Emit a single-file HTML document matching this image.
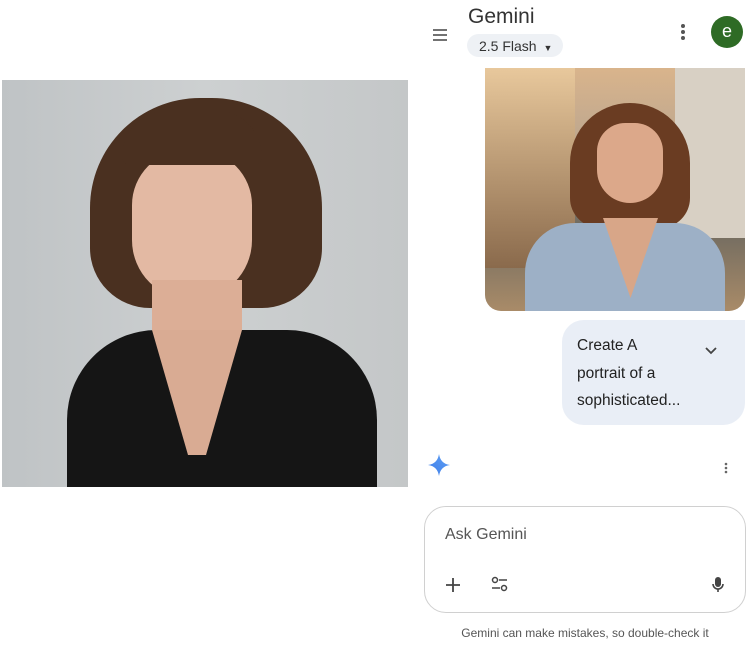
<!DOCTYPE html>
<html><head><style>
*{margin:0;padding:0;box-sizing:border-box}
body{width:748px;height:645px;background:#fff;font-family:"Liberation Sans",sans-serif;position:relative;overflow:hidden;color:#1f1f1f}
.a{position:absolute}
</style></head><body>
<div class="a" style="left:2px;top:80px;width:406px;height:407px;background:linear-gradient(90deg,#bfc3c5,#cdd0d1 50%,#c4c7c8);overflow:hidden">
 <div class="a" style="left:88px;top:18px;width:232px;height:210px;background:#4a3020;border-radius:110px 110px 60px 60px"></div>
 <div class="a" style="left:130px;top:70px;width:120px;height:150px;background:#e3b9a3;border-radius:55px 55px 60px 60px"></div>
 <div class="a" style="left:120px;top:30px;width:140px;height:55px;background:#4a3020;border-radius:60px 60px 10px 10px"></div>
 <div class="a" style="left:150px;top:200px;width:90px;height:80px;background:#dcae96"></div>
 <div class="a" style="left:65px;top:250px;width:310px;height:170px;background:#151515;border-radius:90px 90px 0 0"></div>
 <div class="a" style="left:150px;top:250px;width:90px;height:125px;background:#d9ab93;clip-path:polygon(0 0,100% 0,60% 100%,40% 100%)"></div>
</div>
<svg class="a" style="left:432px;top:28px" width="16" height="14"><path d="M1 2h14M1 7h14M1 12h14" stroke="#444" stroke-width="1.6"/></svg>
<div class="a" style="left:468px;top:5px;font-size:21px;color:#333">Gemini</div>
<div class="a" style="left:467px;top:34px;width:96px;height:23px;background:#eef1f5;border-radius:12px;font-size:14px;color:#333;padding:4px 0 0 12px">2.5 Flash <span style="font-size:9px;margin-left:3px">▼</span></div>
<svg class="a" style="left:680px;top:23px" width="6" height="18"><circle cx="3" cy="3" r="2" fill="#555"/><circle cx="3" cy="9" r="2" fill="#555"/><circle cx="3" cy="15" r="2" fill="#555"/></svg>
<div class="a" style="left:711px;top:16px;width:32px;height:32px;border-radius:50%;background:#2e6b25;color:#fff;font-size:18px;text-align:center;line-height:30px">e</div>
<div class="a" style="left:485px;top:68px;width:260px;height:243px;border-radius:0 0 16px 16px;overflow:hidden;background:linear-gradient(180deg,#d9b48c 0%,#b9a58f 35%,#6f6a60 65%,#a98b68 100%)">
 <div class="a" style="left:0;top:0;width:90px;height:200px;background:linear-gradient(#e8c89c,#8a6a4c)"></div>
 <div class="a" style="left:190px;top:0;width:70px;height:170px;background:#d8d0c4"></div>
 <div class="a" style="left:85px;top:35px;width:120px;height:125px;background:#6a3c22;border-radius:60px 60px 30px 30px"></div>
 <div class="a" style="left:112px;top:55px;width:66px;height:80px;background:#dca88a;border-radius:30px 30px 35px 35px"></div>
 <div class="a" style="left:40px;top:155px;width:200px;height:100px;background:#9db0c6;border-radius:50px 50px 0 0"></div>
 <div class="a" style="left:118px;top:150px;width:55px;height:80px;background:#d8a688;clip-path:polygon(0 0,100% 0,50% 100%)"></div>
</div>
<div class="a" style="left:562px;top:320px;width:183px;height:105px;background:#e9eef6;border-radius:22px 0 22px 22px;padding:12px 0 0 15px;font-size:15.5px;line-height:27.5px;color:#222">Create A<br>portrait of a<br>sophisticated...</div>
<svg class="a" style="left:705px;top:347px" width="12" height="8"><path d="M1 1l5 5 5-5" stroke="#444" stroke-width="1.8" fill="none"/></svg>
<svg class="a" style="left:428px;top:454px" width="22" height="22"><defs><linearGradient id="g" x1="0" y1="1" x2="1" y2="0"><stop offset="0" stop-color="#3f7ee8"/><stop offset="1" stop-color="#5fa0f5"/></linearGradient></defs><path d="M11 0C12 6 15 10 22 11C15 12 12 16 11 22C10 16 7 12 0 11C7 10 10 6 11 0Z" fill="url(#g)"/></svg>
<svg class="a" style="left:724px;top:462px" width="4" height="12"><circle cx="2" cy="2" r="1.3" fill="#666"/><circle cx="2" cy="6" r="1.3" fill="#666"/><circle cx="2" cy="10" r="1.3" fill="#666"/></svg>
<div class="a" style="left:424px;top:506px;width:322px;height:107px;border:1px solid #d0d0d0;border-radius:22px"></div>
<div class="a" style="left:445px;top:526px;font-size:16px;color:#555">Ask Gemini</div>
<svg class="a" style="left:445px;top:577px" width="16" height="16"><path d="M8 1v14M1 8h14" stroke="#444" stroke-width="1.8"/></svg>
<svg class="a" style="left:491px;top:576px" width="18" height="17"><circle cx="4" cy="4" r="2.5" stroke="#444" stroke-width="1.5" fill="none"/><path d="M8 4h8M1 12h8" stroke="#444" stroke-width="1.5"/><circle cx="13" cy="12" r="2.5" stroke="#444" stroke-width="1.5" fill="none"/></svg>
<svg class="a" style="left:711px;top:576px" width="14" height="18"><rect x="4" y="1" width="6" height="10" rx="3" fill="#444"/><path d="M2 8a5 5 0 0 0 10 0M7 13v3" stroke="#444" stroke-width="1.6" fill="none"/></svg>
<div class="a" style="left:424px;top:626px;width:322px;text-align:center;font-size:12px;color:#555">Gemini can make mistakes, so double-check it</div>
</body></html>
